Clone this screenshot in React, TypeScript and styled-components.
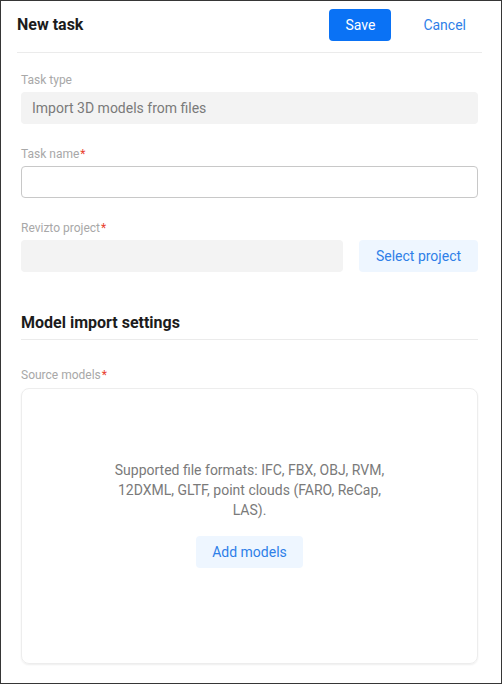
import React from "react";
import styled, { createGlobalStyle } from "styled-components";

const Global = createGlobalStyle`
  html, body { margin: 0; padding: 0; background: #ffffff; }
  * { box-sizing: border-box; }
  body { font-family: Roboto, "Liberation Sans", Arial, sans-serif; }
`;

const Frame = styled.div`
  width: 502px;
  height: 684px;
  border: 1px solid #363636;
  background: #ffffff;
  display: flex;
  flex-direction: column;
  overflow: hidden;
`;

const Header = styled.header`
  display: flex;
  align-items: center;
  margin: 0 19px 0 16px;
  padding: 8px 0 11px;
  border-bottom: 1px solid #ebebeb;
`;

const Title = styled.h1`
  flex: 1;
  margin: 0;
  font-size: 16px;
  line-height: 20px;
  font-weight: 700;
  color: #1c1c1c;
`;

const Button = styled.button<{ $variant: "primary" | "link" | "soft"; $minWidth?: number }>`
  height: 32px;
  padding: 0 16px;
  min-width: ${(p) => p.$minWidth ?? 0}px;
  border: none;
  border-radius: 4px;
  font-family: inherit;
  font-size: 14px;
  line-height: 20px;
  font-weight: 400;
  cursor: pointer;
  white-space: nowrap;
  background: ${(p) =>
    p.$variant === "primary" ? "#0a72f5" : p.$variant === "soft" ? "#eef6ff" : "transparent"};
  color: ${(p) => (p.$variant === "primary" ? "#ffffff" : "#2f7fe8")};
`;

const HeaderActions = styled.div`
  display: flex;
  gap: 16px;
`;

const Body = styled.div`
  padding: 19px 23px 0 20px;
  display: flex;
  flex-direction: column;
`;

const Field = styled.div<{ $gap?: number }>`
  display: flex;
  flex-direction: column;
  margin-bottom: ${(p) => p.$gap ?? 22}px;
`;

const Label = styled.label`
  font-size: 12px;
  line-height: 16px;
  color: #a8a8a8;
  margin-bottom: 4px;
`;

const Req = styled.span`
  color: #e8412f;
  margin-left: 1px;
`;

const ReadBox = styled.div<{ $grow?: boolean }>`
  height: 32px;
  border-radius: 4px;
  background: #f3f3f3;
  padding: 0 11px;
  display: flex;
  align-items: center;
  font-size: 14px;
  color: #7a7a7a;
  ${(p) => (p.$grow ? "flex: 1;" : "")}
`;

const TextInput = styled.input`
  height: 32px;
  width: 100%;
  border: 1px solid #c8c8c8;
  border-radius: 4px;
  padding: 0 10px;
  font-family: inherit;
  font-size: 14px;
  outline: none;
  background: #fff;
`;

const Row = styled.div`
  display: flex;
  gap: 16px;
  align-items: center;
`;

const SectionTitle = styled.h2`
  margin: 41px 0 0;
  padding-bottom: 6px;
  border-bottom: 1px solid #ebebeb;
  font-size: 16px;
  line-height: 20px;
  font-weight: 700;
  color: #1c1c1c;
`;

const SourceField = styled(Field)`
  margin-top: 27px;
`;

const DropZone = styled.div`
  margin-top: 1px;
  height: 276px;
  border: 1px solid #ededed;
  border-radius: 8px;
  box-shadow: 0 1px 2px rgba(0, 0, 0, 0.07);
  display: flex;
  flex-direction: column;
  align-items: center;
  padding-top: 71px;
  gap: 16px;
`;

const Hint = styled.p`
  margin: 0;
  max-width: 286px;
  text-align: center;
  font-size: 14px;
  line-height: 20px;
  color: #7a7a7a;
`;

export default function App() {
  return (
    <>
      <Global />
      <Frame>
        <Header>
          <Title>New task</Title>
          <HeaderActions>
            <Button $variant="primary">Save</Button>
            <Button $variant="link">Cancel</Button>
          </HeaderActions>
        </Header>
        <Body>
          <Field>
            <Label>Task type</Label>
            <ReadBox>Import 3D models from files</ReadBox>
          </Field>
          <Field>
            <Label>
              Task name<Req>*</Req>
            </Label>
            <TextInput />
          </Field>
          <Field $gap={0}>
            <Label>
              Revizto project<Req>*</Req>
            </Label>
            <Row>
              <ReadBox $grow />
              <Button $variant="soft" $minWidth={119}>
                Select project
              </Button>
            </Row>
          </Field>
          <SectionTitle>Model import settings</SectionTitle>
          <SourceField $gap={0}>
            <Label>
              Source models<Req>*</Req>
            </Label>
            <DropZone>
              <Hint>
                Supported file formats: IFC, FBX, OBJ, RVM, 12DXML, GLTF, point clouds (FARO, ReCap,
                LAS).
              </Hint>
              <Button $variant="soft">Add models</Button>
            </DropZone>
          </SourceField>
        </Body>
      </Frame>
    </>
  );
}
